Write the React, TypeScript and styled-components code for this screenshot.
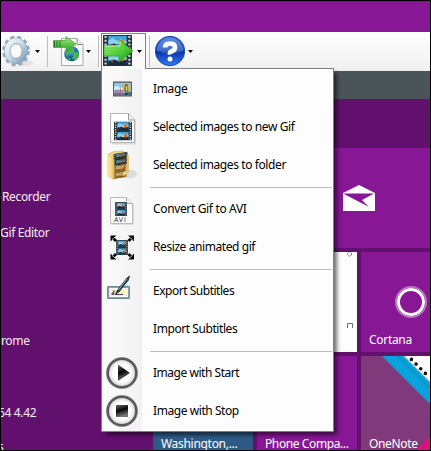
import React from "react";
import styled, { createGlobalStyle } from "styled-components";

const GlobalStyle = createGlobalStyle`
  * { box-sizing: border-box; }
  body { margin: 0; background: #000; font-family: "Noto Sans", "Open Sans", sans-serif; }
  svg { display: block; flex: none; }
`;

const Screen = styled.div`
  position: relative;
  width: 431px;
  height: 451px;
  border: 1px solid #000;
  background: #62106e;
  overflow: hidden;
  display: flex;
  flex-direction: column;
`;

const TitleBand = styled.div`
  height: 31px;
  flex: none;
  background: #871795;
  border-top: 1px solid #6f1b7b;
`;

const Toolbar = styled.div`
  height: 39px;
  flex: none;
  display: flex;
  background: linear-gradient(#fdfdfd, #f7f7f7 50%, #f6f6f6 75%, #eeeeee);
`;

const ToolButton = styled.div<{ $width: number; $inset: number; $gap: number }>`
  width: ${(p) => p.$width}px;
  height: 37px;
  padding-left: ${(p) => p.$inset}px;
  padding-top: 3px;
  display: flex;
  gap: ${(p) => p.$gap}px;
`;

const OpenButton = styled(ToolButton)`
  margin-top: 1px;
  height: 36px;
  padding-top: 1px;
  border: 1px solid #808080;
  border-bottom: 0;
  background: #fafafa;
`;

const Caret = styled.span`
  width: 5px;
  height: 3px;
  margin-top: 15px;
  background: #000;
  clip-path: polygon(0 0, 100% 0, 50% 100%);
`;

const ToolDivider = styled.div<{ $before?: number; $after: number }>`
  width: 1px;
  height: 31px;
  margin: 4px ${(p) => p.$after}px 0 ${(p) => p.$before ?? 0}px;
  background: #bdbdbd;
`;

const InfoBand = styled.div`
  height: 28px;
  flex: none;
  background: #4b5459;
`;

const Desktop = styled.div`
  flex: 1;
  display: flex;
`;

const AppList = styled.div`
  width: 152px;
  padding-top: 88px;
  flex: none;
`;

const AppLabel = styled.div<{ $height: number; $shift: number; $track?: number }>`
  height: ${(p) => p.$height}px;
  line-height: 20px;
  margin-left: ${(p) => p.$shift}px;
  letter-spacing: ${(p) => p.$track ?? -0.35}px;
  font-size: 12px;
  color: #f5edf6;
  white-space: pre;
`;

const Tiles = styled.div`
  display: grid;
  grid-template-columns: 100px 100px 69px;
  grid-template-rows: 100px 100px 94px;
  gap: 4px;
  padding-top: 49px;
`;

const Tile = styled.div<{ $color: string; $column: string; $row: number }>`
  grid-column: ${(p) => p.$column};
  grid-row: ${(p) => p.$row};
  background: ${(p) => p.$color};
  position: relative;
  overflow: hidden;
  display: flex;
  flex-direction: column;
`;

const TileName = styled.div<{ $bottom: number; $track: number }>`
  position: relative;
  margin: auto 0 ${(p) => p.$bottom}px 8px;
  font-size: 12px;
  line-height: 16px;
  letter-spacing: ${(p) => p.$track}px;
  color: #fff;
  white-space: nowrap;
`;

const MailMark = styled.div`
  padding: 37px 0 0 86px;
`;

const CortanaRing = styled.div`
  width: 32px;
  height: 32px;
  margin: 34px 0 0 34px;
  border-radius: 50%;
  border: 2px solid #b779bf;
  box-shadow: inset 0 0 0 3px #fff;
`;

const TileArt = styled.div`
  position: absolute;
  inset: 0;
`;

const QrMark = styled.div`
  padding: 0 0 0 90px;
`;

const Menu = styled.div`
  position: absolute;
  left: 100px;
  top: 67px;
  width: 233px;
  height: 364px;
  padding: 1px 0;
  border: 1px solid #808080;
  background: linear-gradient(90deg, #fcfcfc, #f1f1f1 40px, #fdfdfd 40px);
  box-shadow: 4px 4px 4px -1px rgba(0, 0, 0, 0.55);
`;

const MenuJoin = styled.div`
  position: absolute;
  left: 0;
  top: -1px;
  width: 43px;
  height: 1px;
  background: #fafafa;
`;

const MenuItem = styled.div`
  height: 38px;
  display: grid;
  grid-template-columns: 51px 1fr;
  align-items: center;
  font-size: 12px;
  color: #000;
  white-space: nowrap;
`;

const MenuText = styled.span<{ $track: number }>`
  letter-spacing: ${(p) => p.$track}px;
  line-height: 16px;
`;

const IconCell = styled.div`
  width: 38px;
  padding-left: 4px;
`;

const MenuDivider = styled.div`
  height: 1px;
  margin: 3px 1px 2px 48px;
  background: #bdbdbd;
`;

type Box = { x: number; y: number; w: number; h: number };

function Scene({ x, y, w, h }: Box) {
  return (
    <svg x={x} y={y} width={w} height={h} viewBox="0 0 20 14" preserveAspectRatio="none">
      <rect width="20" height="14" fill="#8cc4e2" />
      <path d="M0 5l4-2 3 3 4-1 3 3H0z" fill="#d5ecf7" />
      <path d="M0 12l5-1 5 1 10-2v4H0z" fill="#4c6678" />
      <path d="M1 13V9l1.500-2 1 6M6.500 13V8l1.500-2 1 7" fill="#e0534d" />
      <path d="M4 13V8l1-1 1 6M9.500 13V9l1-1 1 5" fill="#6f80d6" />
      <circle cx="14.500" cy="6" r="4.500" fill="#d9b64a" />
      <path d="M13 2h3l1 8h-5z" fill="#7d5a42" />
      <path d="M14 4h1.500v5H14z" fill="#ffec8c" />
      <path d="M13 11h3v2h-3z" fill="#322015" />
    </svg>
  );
}

function Frame({ x, y, w, h }: Box) {
  return (
    <svg x={x} y={y} width={w} height={h} viewBox="0 0 20 14" preserveAspectRatio="none">
      <rect width="20" height="14" fill="#3fa6df" />
      <path d="M0 5l5-3 4 3 5-2 6 3v3H0z" fill="#8fd0ef" />
      <path d="M0 10l6-2 5 2 9-2v6H0z" fill="#162a3c" />
      <path d="M11 9l2-5 3-1 2 4-2 3z" fill="#e8862a" />
      <path d="M13 5h2v4h-2z" fill="#c5301f" />
      <path d="M3 11l1-3 2 3z" fill="#d9482f" />
    </svg>
  );
}

function Strip({ x, y, w, h }: Box) {
  return (
    <svg x={x} y={y} width={w} height={h} viewBox="0 0 28 31" preserveAspectRatio="none">
      <rect width="28" height="31" fill="#283236" />
      <path d="M2.500 1v30M25.500 1v30" stroke="#c3d2d4" strokeWidth="2.200" strokeDasharray="2 1.800" />
      <Frame x={5} y={1} w={18} h={13} />
      <Frame x={5} y={17} w={18} h={13} />
    </svg>
  );
}

const GearIcon = () => (
  <svg width="31" height="32" viewBox="0 0 31 32">
    <defs>
      <linearGradient id="gear" x2="1" y2="1">
        <stop stopColor="#f7fbfd" />
        <stop offset=".5" stopColor="#c6d8e6" />
        <stop offset="1" stopColor="#7f9db5" />
      </linearGradient>
    </defs>
    <ellipse cx="23" cy="28" rx="8" ry="3" fill="#e2e2e2" />
    <ellipse cx="14" cy="16" rx="11.800" ry="13.400" fill="none" stroke="#93aabb" strokeWidth="4" strokeDasharray="3.800 2.900" />
    <ellipse cx="14" cy="16" rx="8.800" ry="10.200" fill="none" stroke="#8fa8ba" strokeWidth="6" />
    <ellipse cx="14" cy="16" rx="8.800" ry="10.200" fill="none" stroke="url(#gear)" strokeWidth="5" />
    <ellipse cx="14" cy="16" rx="6" ry="7.300" fill="#fafafa" stroke="#7f9bb0" strokeWidth=".7" />
  </svg>
);

const WebPageIcon = () => (
  <svg width="31" height="32" viewBox="0 0 31 32">
    <defs>
      <linearGradient id="arrowWeb" x2="0" y2="1">
        <stop stopColor="#a2ed78" />
        <stop offset="1" stopColor="#229c22" />
      </linearGradient>
      <radialGradient id="globe" cx=".35" cy=".25">
        <stop stopColor="#a2ddfa" />
        <stop offset="1" stopColor="#1157a4" />
      </radialGradient>
    </defs>
    <path d="M8.500 3.500H24l6 6v21H8.500z" fill="#fdfdfd" stroke="#a8a8a8" />
    <path d="M24 3.500v6h6" fill="#e8e8e8" stroke="#888" />
    <circle cx="18.700" cy="18.700" r="7.500" fill="url(#globe)" />
    <path d="M12 17l5-5 4 2-2 4-4 1-1 4zM20 18l5-2 1 4-3 5-4-1 1-3zM14 22l4 2-2 2z" fill="#44b548" />
    <path d="M.5 5.500H13V1.500l10 7.500-10 8v-4.500H.5z" fill="url(#arrowWeb)" stroke="#459c36" strokeWidth=".7" />
    <path d="M1.500 6v6M4 6v6M7 6v6" stroke="#166f20" strokeWidth="1" />
  </svg>
);

const ExportFilmIcon = () => (
  <svg width="31" height="32" viewBox="0 0 31 32">
    <defs>
      <linearGradient id="arrowFilm" x2="1" y2="1">
        <stop stopColor="#9cec6d" />
        <stop offset=".55" stopColor="#4fcc39" />
        <stop offset="1" stopColor="#14901c" />
      </linearGradient>
    </defs>
    <Strip x={0} y={0} w={29} h={31} />
    <path d="M1 10.500H16V4.500l14 11.500-14 11v-6H1z" fill="url(#arrowFilm)" stroke="#359e2c" strokeWidth=".7" />
    <path d="M1.500 11H17V6" fill="none" stroke="#c0f7a0" />
  </svg>
);

const HelpIcon = () => (
  <svg width="31" height="32" viewBox="0 0 31 32">
    <defs>
      <linearGradient id="help" x2="0" y2="1">
        <stop stopColor="#4777df" />
        <stop offset=".48" stopColor="#174fc0" />
        <stop offset=".5" stopColor="#062fab" />
        <stop offset="1" stopColor="#327bf5" />
      </linearGradient>
    </defs>
    <circle cx="15" cy="16" r="14.700" fill="url(#help)" stroke="#1b4bad" />
    <path d="M2 16a13 13 0 0 1 26 0q-13 5-26 0" fill="#fff" fillOpacity=".18" />
    <path d="M10 12.500Q10 8.500 15 8.500t5 4q0 2.500-2.800 3.500t-2.200 3.500" fill="none" stroke="#fff" strokeWidth="4.600" />
    <circle cx="15" cy="24" r="2.500" fill="#fff" />
  </svg>
);

const iconSize = { width: 34, height: 36, viewBox: "0 0 34 36" };

const PictureIcon = () => (
  <svg {...iconSize}>
    <rect x="7" y="10.500" width="19" height="15" fill="#565c60" />
    <Scene x={8} y={11.500} w={17} h={13} />
  </svg>
);

const PageFilmIcon = () => (
  <svg {...iconSize}>
    <path d="M6 34.500h23V10" fill="none" stroke="#d8d8d8" strokeWidth="2" />
    <path d="M4.500 4.500h18l6 6.500v22.500h-24z" fill="#fefefe" stroke="#b4b4b4" />
    <path d="M22.500 4.500V11h6" fill="#eee" stroke="#999" />
    <Strip x={8} y={12.500} w={18} h={19} />
  </svg>
);

const FolderFilmIcon = () => (
  <svg {...iconSize}>
    <defs>
      <linearGradient id="folder">
        <stop stopColor="#fff4b3" />
        <stop offset="1" stopColor="#dfbb58" />
      </linearGradient>
    </defs>
    <ellipse cx="23" cy="27" rx="8" ry="4.500" fill="#dcdcdc" />
    <path d="M2.500 7l5-2.500 10-.5v25l-7 2L3 27z" fill="#f0d582" stroke="#cfae55" strokeWidth=".6" />
    <g transform="translate(7.500 6) skewY(-9)">
      <Strip x={0} y={1} w={14} h={12} />
      <Strip x={0} y={13} w={13} h={13} />
      <rect y="13" width="13" height="13" fill="#ff8c00" opacity=".5" />
      <rect y="1" width="14" height="12" fill="#402008" opacity=".4" />
    </g>
    <path d="M2 7.500l6 5V33l-6-4.500z" fill="url(#folder)" stroke="#d1b24f" strokeWidth=".5" />
    <path d="M21 9l1.500-1v17L17 29v-3l4-3z" fill="url(#folder)" stroke="#d1b24f" strokeWidth=".5" />
  </svg>
);

const AviText = styled.text`
  font: 6.500px "DejaVu Sans", sans-serif;
  letter-spacing: 0.8px;
  fill: #333;
`;

const AviIcon = () => (
  <svg {...iconSize}>
    <path d="M5 33h22V13" fill="none" stroke="#ddd" strokeWidth="2" />
    <path d="M4.500 6.500h16l6 6v20h-22z" fill="#fbfbfb" stroke="#bbb" />
    <path d="M20.500 6.500v6h6" fill="#eee" stroke="#aaa" />
    <Strip x={9} y={11} w={12} h={14} />
    <AviText x="8" y="31">AVI</AviText>
  </svg>
);

const ResizeIcon = () => (
  <svg {...iconSize}>
    <Strip x={10} y={11} w={12} h={15} />
    {["", "translate(32.500 0) scale(-1 1)", "translate(0 37) scale(1 -1)", "translate(32.500 37) scale(-1 -1)"].map((transform) => (
      <g key={transform} transform={transform}>
        <path d="M4.500 6.500h6L8.500 8.500l2.500 2.500-2 2-2.500-2.500-2 2z" fill="#080808" />
        <path d="M6 10.500l4-3" stroke="#fff" strokeWidth=".7" />
      </g>
    ))}
  </svg>
);

const SubtitleIcon = () => (
  <svg {...iconSize}>
    <rect x="1" y="13" width="23" height="13" rx="1" fill="#708997" />
    <rect x="2.500" y="14.500" width="20" height="10" fill="#dbe9ed" stroke="#8fa3ad" />
    <rect x="5" y="15.500" width="16" height="8" fill="#fff3b4" stroke="#fff" />
    <path d="M5 21.500q2-1 3-4 0 4-2 4 3-1 4 0h7" fill="none" stroke="#4d376a" />
    <path d="M9.500 21l2-4L21 5l2.500-2-1 4-9.500 12z" fill="#263d49" stroke="#142832" strokeWidth=".7" />
    <path d="M12.500 17L21 6" stroke="#76a9bd" strokeWidth="1" />
  </svg>
);

function MediaIcon({ stop = false }: { stop?: boolean }) {
  const face = stop ? "stopFace" : "playFace";
  const ink = stop ? "stopInk" : "playInk";
  return (
    <svg {...iconSize}>
      <defs>
        <linearGradient id={ink} x2=".3" y2="1">
          <stop stopColor="#666" />
          <stop offset=".5" stopColor="#080808" />
          <stop offset="1" stopColor="#777" />
        </linearGradient>
        <radialGradient id={face}>
          <stop offset=".6" stopColor="#fff" />
          <stop offset="1" stopColor="#c4c4c4" />
        </radialGradient>
      </defs>
      <circle cx="16" cy="18" r="15" fill={`url(#${face})`} stroke="#9a9a9a" strokeWidth="2" />
      <circle cx="16" cy="18" r="14.200" fill="none" stroke="#585858" strokeWidth="2.300" />
      {stop ? <rect x="10" y="12" width="12" height="12" fill={`url(#${ink})`} /> : <path d="M12 9.500L24 18 12 26z" fill={`url(#${ink})`} />}
    </svg>
  );
}

const groups = [
  [
    { label: "Image", track: -0.35, icon: <PictureIcon /> },
    { label: "Selected images to new Gif", track: -0.4, icon: <PageFilmIcon /> },
    { label: "Selected images to folder", track: -0.4, icon: <FolderFilmIcon /> },
  ],
  [
    { label: "Convert Gif to AVI", track: -0.35, icon: <AviIcon /> },
    { label: "Resize animated gif", track: -0.42, icon: <ResizeIcon /> },
  ],
  [
    { label: "Export Subtitles", track: -0.48, icon: <SubtitleIcon /> },
    { label: "Import Subtitles", track: -0.43, icon: null },
  ],
  [
    { label: "Image with Start", track: -0.47, icon: <MediaIcon /> },
    { label: "Image with Stop", track: -0.43, icon: <MediaIcon stop /> },
  ],
];

export default function App() {
  return (
    <>
      <GlobalStyle />
      <Screen>
        <TitleBand />
        <Toolbar>
          <ToolButton $width={46} $inset={1} $gap={2}><GearIcon /><Caret /></ToolButton>
          <ToolDivider $after={4} />
          <ToolButton $width={46} $inset={1} $gap={2}><WebPageIcon /><Caret /></ToolButton>
          <ToolDivider $after={2} />
          <OpenButton $width={45} $inset={1} $gap={3}><ExportFilmIcon /><Caret /></OpenButton>
          <ToolDivider $before={3} $after={4} />
          <ToolButton $width={46} $inset={1} $gap={2}><HelpIcon /><Caret /></ToolButton>
        </Toolbar>
        <InfoBand />
        <Desktop>
          <AppList>
            <AppLabel $height={36} $shift={1}>Recorder</AppLabel>
            <AppLabel $height={108} $shift={-1}>Gif Editor</AppLabel>
            <AppLabel $height={72} $shift={0}>rome</AppLabel>
            <AppLabel $height={34} $shift={-3}>64 4.42</AppLabel>
            <AppLabel $height={10} $shift={-3}>s</AppLabel>
          </AppList>
          <Tiles>
            <Tile $color="#871795" $column="2 / 4" $row={1}>
              <MailMark>
                <svg width="32" height="26" viewBox="0 0 32 26">
                  <path d="M0 8L16 0l16 8v18H0z" fill="#fff" />
                  <path d="M1 8.500h30L19 15l7 7-25-13z" fill="#871795" />
                </svg>
              </MailMark>
            </Tile>
            <Tile $color="#fdfdfd" $column="2" $row={2}>
              <QrMark>
                <svg width="10" height="80" viewBox="0 0 10 80">
                  <circle cx="2.500" cy="2" r="2" fill="none" stroke="#555" strokeDasharray="1.500 1" />
                  <path d="M.5 76V71.500h5V76" fill="#fff" stroke="#6d6d6d" />
                </svg>
              </QrMark>
            </Tile>
            <Tile $color="#871795" $column="3" $row={2}>
              <CortanaRing />
              <TileName $bottom={4} $track={-0.3}>Cortana</TileName>
            </Tile>
            <Tile $color="#2d5b86" $column="1" $row={3}>
              <TileName $bottom={-2} $track={-0.3}>Washington,...</TileName>
            </Tile>
            <Tile $color="#871795" $column="2" $row={3}>
              <TileName $bottom={-2} $track={-0.4}>Phone Compa...</TileName>
            </Tile>
            <Tile $color="#80397b" $column="3" $row={3}>
              <TileArt>
                <svg width="69" height="94" viewBox="0 0 69 94">
                  <path d="M21 0h48v48z" fill="#08a2dc" />
                  <path d="M43 0h26v26z" fill="#fbfbfb" />
                  <path d="M37 0l31 31" stroke="#137b9d" strokeWidth="2" strokeDasharray="1 1.500" />
                  <path d="M43 0l26 26" stroke="#b5b5b5" strokeWidth="1.500" strokeDasharray="3 3" />
                  <path d="M49 2l20 20" fill="none" stroke="#111" strokeWidth="3.600" strokeDasharray="0 6.600" strokeDashoffset="-2" strokeLinecap="round" />
                  <path d="M55 94l14-14v14z" fill="#d9127d" />
                </svg>
              </TileArt>
              <TileName $bottom={-2} $track={-0.35}>OneNote</TileName>
            </Tile>
          </Tiles>
        </Desktop>
        <Menu>
          <MenuJoin />
          {groups.map((items, index) => (
            <React.Fragment key={index}>
              {index > 0 && <MenuDivider />}
              {items.map(({ label, track, icon }) => (
                <MenuItem key={label}>
                  <IconCell>{icon}</IconCell>
                  <MenuText $track={track}>{label}</MenuText>
                </MenuItem>
              ))}
            </React.Fragment>
          ))}
        </Menu>
      </Screen>
    </>
  );
}
